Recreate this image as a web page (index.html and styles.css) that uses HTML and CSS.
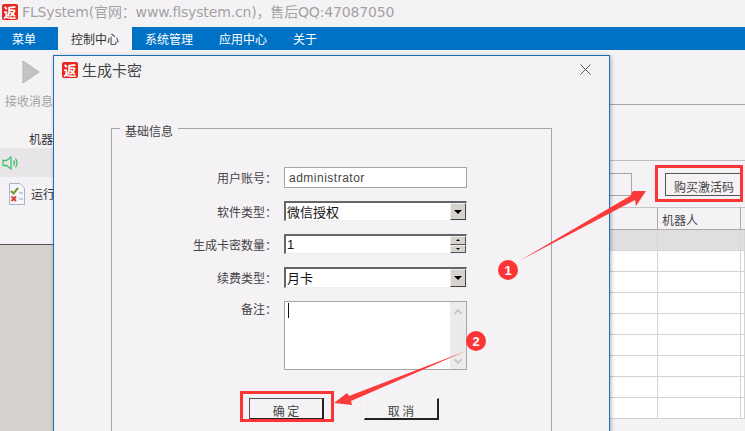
FILE: index.html
```html
<!DOCTYPE html>
<html lang="zh">
<head>
<meta charset="utf-8">
<title>FLSystem</title>
<link rel="stylesheet" href="styles.css">
</head>
<body>
<div class="app">
  <header class="titlebar">
    <span class="logo">返</span>
    <span class="app-title">FLSystem(官网：www.flsystem.cn)，售后QQ:47087050</span>
  </header>
  <nav class="menubar">
    <span class="tab tab-first">菜单</span>
    <span class="tab tab-active">控制中心</span>
    <span class="tab">系统管理</span>
    <span class="tab">应用中心</span>
    <span class="tab">关于</span>
  </nav>
  <main class="workspace">
    <section class="left">
      <div class="tool">
        <svg class="play" width="18" height="24" viewBox="0 0 18 24"><path d="M1 1 L17 12 L1 23 Z" fill="#c4c4c4" stroke="#b2b2b2"/></svg>
        <span class="tool-label">接收消息</span>
      </div>
      <div class="left-head">机器人</div>
      <div class="status-row">
        <svg width="18" height="16" viewBox="0 0 18 16" fill="none" stroke="#3ec46d" stroke-width="1.3"><path d="M2 5.500H5.500L10 2V14L5.500 10.500H2Z"/><path d="M12.500 5.500Q14.500 8 12.500 10.500"/><path d="M14.500 3.500Q17.500 8 14.500 12.500"/></svg>
      </div>
      <div class="run-row">
        <svg width="18" height="22" viewBox="0 0 18 22"><path d="M1.500 .5H12L16.500 5V21.500H1.500Z" fill="#f4f6fb" stroke="#a9b4c8"/><path d="M3 8L5.500 10.500L10 5" fill="none" stroke="#6f9e28" stroke-width="2"/><path d="M3.500 13.500L8 18M8 13.500L3.500 18" stroke="#d9403a" stroke-width="2"/><path d="M11 10H15M11 16H15" stroke="#9aa8bd"/></svg>
        <span>运行日志</span>
      </div>
      <div class="left-fill"></div>
    </section>
    <section class="right">
      <div class="right-band"></div>
      <div class="right-tools">
        <div class="search"></div>
        <div class="buy">购买激活码</div>
      </div>
      <div class="table">
        <div class="th"></div><div class="th">机器人</div><div class="th"></div>
        <div class="td hi"></div><div class="td hi"></div><div class="td hi"></div>
        <div class="td"></div><div class="td"></div><div class="td"></div>
        <div class="td"></div><div class="td"></div><div class="td"></div>
        <div class="td"></div><div class="td"></div><div class="td"></div>
        <div class="td"></div><div class="td"></div><div class="td"></div>
        <div class="td"></div><div class="td"></div><div class="td"></div>
        <div class="td"></div><div class="td"></div><div class="td"></div>
        <div class="td"></div><div class="td"></div><div class="td"></div>
        <div class="td"></div><div class="td"></div><div class="td"></div>
      </div>
    </section>
  </main>

  <div class="dialog">
    <div class="dialog-head">
      <span class="logo">返</span>
      <span class="dialog-title">生成卡密</span>
      <svg class="close" width="13" height="13" viewBox="0 0 13 13"><path d="M1.500 1.500L11.500 11.500M11.500 1.500L1.500 11.500" stroke="#555" stroke-width="1"/></svg>
    </div>
    <fieldset class="group">
      <legend class="group-title">基础信息</legend>
      <div class="form">
        <label class="lbl">用户账号：</label>
        <div class="text-input">administrator</div>
        <label class="lbl">软件类型：</label>
        <div class="sunken"><span class="val">微信授权</span><span class="drop"><i class="tri"></i></span></div>
        <label class="lbl">生成卡密数量：</label>
        <div class="sunken"><span class="val val-num">1</span><span class="spin"><span class="spin-btn"><i class="tri-up"></i></span><span class="spin-btn"><i class="tri-small"></i></span></span></div>
        <label class="lbl">续费类型：</label>
        <div class="sunken"><span class="val">月卡</span><span class="drop"><i class="tri"></i></span></div>
        <label class="lbl lbl-top">备注：</label>
        <div class="memo"><span class="caret"></span><span class="memo-bar"><i class="chev chev-up"></i><i class="chev chev-down"></i></span></div>
      </div>
      <div class="actions">
        <div class="btn btn-default">确 定</div>
        <div class="btn">取 消</div>
      </div>
    </fieldset>
  </div>

  <div class="mark mark-buy"></div>
  <div class="mark mark-ok"></div>
  <svg class="notes" width="745" height="431" viewBox="0 0 745 431">
    <polygon points="519,261 630,196 633,191 646,191 636,206 635,200" fill="#fb3b3b"/>
    <polygon points="466,351 349,396 347,393 334,403 352,405 351,401" fill="#fb3b3b"/>
    <circle cx="508" cy="270" r="10" fill="#fb3535"/>
    <circle cx="476" cy="341" r="10" fill="#fb3535"/>
    <text x="508" y="275" class="num">1</text>
    <text x="476" y="346" class="num">2</text>
  </svg>
</div>
</body>
</html>
```

FILE: styles.css
```css
* { box-sizing: border-box; }
html, body { margin: 0; padding: 0; }
body {
  width: 745px;
  height: 431px;
  overflow: hidden;
  background: #f5f2f6;
  font-family: "Noto Sans CJK SC", "Liberation Sans", sans-serif;
  font-size: 12px;
  color: #444;
}
.app { position: relative; width: 745px; height: 431px; overflow: hidden; }

.titlebar { height: 27px; display: flex; align-items: center; gap: 4px; padding: 0 0 4px 2px; }
.logo {
  width: 16px; height: 16px; flex: none;
  background: #e8261c; border-radius: 2px;
  color: #fff; font-size: 13px; line-height: 16px; text-align: center; font-weight: 700;
}
.app-title {
  color: #a2a2a2; font-size: 14px; line-height: 20px; white-space: nowrap; letter-spacing: -.16px;
  font-family: "DejaVu Sans", "Noto Sans CJK SC", sans-serif;
}

.menubar { height: 23px; background: #0072c6; display: flex; }
.tab { width: 74px; padding-left: 13px; color: #fff; line-height: 24px; white-space: nowrap; }
.tab-first { width: 58px; padding-left: 12px; }
.tab-active { background: #f5f2f6; color: #333; }

.workspace { display: flex; height: 381px; }
.left { width: 300px; display: flex; flex-direction: column; }
.tool { width: 54px; height: 80px; padding: 10px 0 0 5px; display: flex; flex-direction: column; }
.play { margin-left: 17px; }
.tool-label { margin-top: 9px; color: #a2a2a2; line-height: 16px; white-space: nowrap; }
.left-head { height: 18px; padding-left: 29px; color: #333; line-height: 18px; }
.status-row { height: 29px; background: #e9e6e9; padding: 7px 0 0 1px; }
.run-row { height: 67px; display: flex; align-items: flex-start; gap: 5px; padding: 6px 0 0 8px; color: #333; }
.run-row span { line-height: 22px; }
.left-fill { flex: 1; background: #d6d3ce; border-top: 1px solid #555; }

.right { flex: 1; display: flex; flex-direction: column; }
.right-band { height: 56px; margin-top: 54px; border-top: 1px solid #a6a6a6; }
.right-tools {
  height: 47px; border-top: 1px solid #bdbbbe;
  display: flex; align-items: flex-start; padding-top: 12px;
}
.search { flex: none; width: 333px; height: 23px; border: 1px solid #a6a6a6; }
.buy {
  flex: none; width: 77px; height: 23px; margin-left: 33px;
  border: 1px solid #555; background: #f5f2f6;
  color: #444; text-align: center; line-height: 25px; padding-left: 1px;
  font-size: 12px; white-space: nowrap;
}
.table {
  display: grid;
  grid-template-columns: 359px 83px 4px;
  grid-template-rows: 23px;
  grid-auto-rows: 21px;
}
.th {
  background: #f5f2f6; padding-left: 4px;
  border-right: 1px solid #a9a9a9; border-bottom: 1px solid #a9a9a9; border-top: 1px solid #c6c4c6;
  color: #444; line-height: 24px;
}
.td { background: #fff; border-right: 1px solid #d2d2d2; border-bottom: 1px solid #d2d2d2; }
.td.hi { background: #e0dee0; border-right-color: #d6d4d6; border-bottom-color: #d6d4d6; }

.dialog {
  position: absolute; left: 53px; top: 55px;
  width: 557px; height: 420px;
  background: #f5f2f6;
  border: 1px solid #1a6fb5;
  box-shadow: 1px 1px 4px rgba(0,0,0,.3);
}
.dialog-head { height: 61px; display: flex; align-items: flex-start; gap: 4px; padding: 6px 0 0 8px; position: relative; }
.dialog-title { font-size: 15px; line-height: 15px; color: #444; }
.close { position: absolute; left: 525px; top: 7px; }

.group {
  margin: 0 0 0 57px; padding: 0;
  width: 441px; height: 350px;
  border: 1px solid #a6a6a6;
}
.group-title { margin-left: 8px; padding: 6px 5px 0; line-height: 16px; color: #444; }

.form {
  display: grid;
  grid-template-columns: 165px 183px;
  column-gap: 7px;
  grid-template-rows: 21px 20px 20px 21px 69px;
  row-gap: 13px;
  margin-top: 28px;
}
.lbl { text-align: right; line-height: 21px; white-space: nowrap; color: #444; }
.lbl-top { line-height: 16px; }
.text-input {
  border: 1px solid #a6a6a6; background: #fff;
  padding: 1px 0 0 4px; line-height: 19px; letter-spacing: .5px;
  font-family: "Liberation Sans", sans-serif; color: #444; font-size: 12px;
}
.sunken {
  display: flex; justify-content: space-between;
  background: #fff;
  border-top: 2px solid #666; border-left: 2px solid #666;
  border-right: 1px solid #eee; border-bottom: 1px solid #eee;
  color: #111;
}
.val { padding-left: 1px; line-height: 18px; font-size: 13px; }
.val-num { font-family: "Liberation Sans", sans-serif; }
.drop {
  width: 16px; background: #d6d3ce;
  border: 1px solid; border-color: #eee #444 #444 #eee;
  display: flex; align-items: center; justify-content: center;
}
.tri { width: 0; height: 0; border: 4px solid transparent; border-top: 4px solid #000; border-bottom: 0; }
.spin { width: 16px; display: flex; flex-direction: column; }
.spin-btn {
  flex: 1; background: #d6d3ce;
  border: 1px solid; border-color: #eee #555 #555 #eee;
  display: flex; align-items: center; justify-content: center;
}
.tri-up { width: 0; height: 0; border: 2px solid transparent; border-bottom: 2px solid #000; border-top: 0; }
.tri-small { width: 0; height: 0; border: 2px solid transparent; border-top: 2px solid #000; border-bottom: 0; }
.memo {
  position: relative; display: flex; justify-content: space-between;
  border: 1px solid #a6a6a6; background: #fff;
}
.caret { width: 1px; height: 15px; background: #111; margin: 1px 0 0 3px; }
.memo-bar {
  width: 16px; background: #eceaec;
  display: flex; flex-direction: column; justify-content: space-between; align-items: center;
  padding: 7px 0 6px;
}
.chev { width: 6px; height: 6px; border: solid #c8c8c8; border-width: 2px 0 0 2px; }
.chev-up { transform: rotate(45deg); margin-top: 1px; }
.chev-down { transform: rotate(225deg); }

.actions { display: flex; gap: 40px; margin: 28px 0 0 137px; }
.btn {
  width: 75px; height: 22px; background: #f5f2f6;
  border: 1px solid #f8f8f8; border-right: 2px solid #222; border-bottom: 2px solid #222;
  text-align: center; line-height: 23px; color: #444;
}
.btn-default { border-top: 1px solid #555; border-left: 1px solid #555; }

.mark { position: absolute; border: 3px solid #fb3535; }
.mark-buy { left: 655px; top: 165px; width: 88px; height: 37px; }
.mark-ok { left: 240px; top: 391px; width: 94px; height: 31px; }
.notes { position: absolute; left: 0; top: 0; }
.num { fill: #fff; font: 700 13px "Liberation Sans", sans-serif; text-anchor: middle; }
```
